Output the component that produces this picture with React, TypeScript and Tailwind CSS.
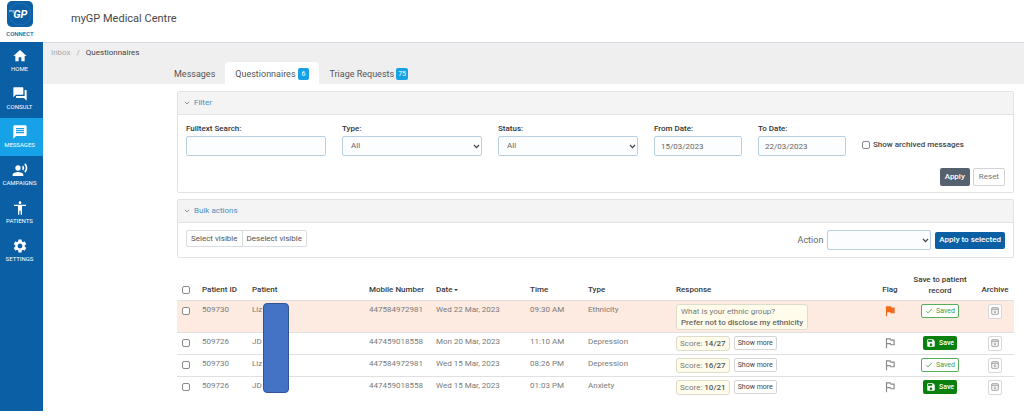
import type { ReactNode } from 'react';
import {
  MdAccessibility,
  MdCheck,
  MdFlag,
  MdForum,
  MdHome,
  MdMessage,
  MdOutlinedFlag,
  MdRecordVoiceOver,
  MdSave,
  MdSettings,
} from 'react-icons/md';
import type { IconType } from 'react-icons';

const navItems: { label: string; Icon: IconType; active?: boolean }[] = [
  { label: 'HOME', Icon: MdHome },
  { label: 'CONSULT', Icon: MdForum },
  { label: 'MESSAGES', Icon: MdMessage, active: true },
  { label: 'CAMPAIGNS', Icon: MdRecordVoiceOver },
  { label: 'PATIENTS', Icon: MdAccessibility },
  { label: 'SETTINGS', Icon: MdSettings },
];

type Row = {
  id: string;
  patient: string;
  mobile: string;
  date: string;
  time: string;
  type: string;
  score?: string;
  question?: string;
  answer?: string;
  flagged?: boolean;
  saved?: boolean;
};

const rows: Row[] = [
  {
    id: '509730',
    patient: 'Liz',
    mobile: '447584972981',
    date: 'Wed 22 Mar, 2023',
    time: '09:30 AM',
    type: 'Ethnicity',
    question: 'What is your ethnic group?',
    answer: 'Prefer not to disclose my ethnicity',
    flagged: true,
    saved: true,
  },
  { id: '509726', patient: 'JD', mobile: '447459018558', date: 'Mon 20 Mar, 2023', time: '11:10 AM', type: 'Depression', score: '14/27' },
  { id: '509730', patient: 'Liz', mobile: '447584972981', date: 'Wed 15 Mar, 2023', time: '08:26 PM', type: 'Depression', score: '16/27', saved: true },
  { id: '509726', patient: 'JD', mobile: '447459018558', date: 'Wed 15 Mar, 2023', time: '01:03 PM', type: 'Anxiety', score: '10/21' },
];

const fieldClass =
  'block h-5 w-full rounded-xs border border-[#b9d0e2] bg-[#fbfdff] text-[8px] leading-none text-[#666]';
const checkboxClass =
  'block size-2 shrink-0 appearance-none rounded-[2px] border border-[#8a8a8a] bg-white checked:bg-[#0b5fa5]';

function Chevron({ className }: { className: string }) {
  return (
    <svg viewBox="0 0 8 6" className={className} fill="none" stroke="currentColor" strokeWidth="1.5" aria-hidden="true">
      <path d="M1 1.2 4 4.4 7 1.2" />
    </svg>
  );
}

function Select({ id, options }: { id: string; options: string[] }) {
  return (
    <div className="relative w-full">
      <select id={id} className={`${fieldClass} appearance-none px-2`}>
        {options.map((option) => (
          <option key={option}>{option}</option>
        ))}
      </select>
      <Chevron className="pointer-events-none absolute top-2 right-0.5 h-[5px] w-[7px] text-[#444]" />
    </div>
  );
}

function Field({ id, label, width, children }: { id: string; label: string; width: string; children: ReactNode }) {
  return (
    <div className={width}>
      <label htmlFor={id} className="mb-px block text-[8px] leading-3 font-medium text-[#333]">
        {label}
      </label>
      {children}
    </div>
  );
}

function Panel({ title, children }: { title: string; children: ReactNode }) {
  return (
    <section className="rounded-xs border border-[#e2e2e2] bg-white">
      <h2 className="border-b border-[#e2e2e2] bg-[#f4f4f4]">
        <button type="button" className="flex h-[22px] w-full items-center gap-1 px-1.5 text-[8px] text-[#4f8fbd]">
          <Chevron className="h-1 w-[6px] text-[#888]" />
          {title}
        </button>
      </h2>
      {children}
    </section>
  );
}

function ArchiveIcon() {
  return (
    <svg viewBox="0 0 16 16" className="size-2" fill="none" stroke="currentColor" strokeWidth="1.6" aria-hidden="true">
      <rect x="1.5" y="1.5" width="13" height="13" rx="1" />
      <path d="M1.5 4.5h13M8 6.5v5M5.7 9.2 8 11.5l2.3-2.3" />
    </svg>
  );
}

function ResponseCell({ row }: { row: Row }) {
  const box = 'rounded-[3px] border border-[#dcdccb] bg-[#fffcec]';
  if (row.question) {
    return (
      <div className={`${box} inline-block px-1 py-px align-top leading-[11px]`}>
        <div>{row.question}</div>
        <div className="font-medium text-[#666]">{row.answer}</div>
      </div>
    );
  }
  return (
    <div className="flex gap-1">
      <span className={`${box} h-[15px] px-[3px] leading-[13px]`}>
        Score: <b className="font-medium text-[#555]">{row.score}</b>
      </span>
      <button type="button" className="h-[14px] rounded-xs border border-[#d4d4d4] bg-white px-[3px] text-[7px] leading-3 text-[#444]">
        Show more
      </button>
    </div>
  );
}

export default function App() {
  return (
    <div className="bg-white font-['Roboto','Liberation_Sans',sans-serif] text-[8px] leading-3 text-[#7a7a7a]">
      <header className="flex h-[42px] items-center">
        <a href="#home" className="flex w-[40px] flex-col items-center self-start pt-px text-[#0b5fa5]">
          <svg viewBox="0 0 26 26" className="size-[26px]" role="img" aria-label="myGP">
            <rect width="26" height="26" rx="5" fill="#0b5fa5" />
            <circle cx="13" cy="13" r="11" fill="none" stroke="#2f7cba" strokeWidth="0.6" />
            <text x="2" y="17" fill="#fff" fontFamily="Roboto" fontStyle="italic">
              <tspan fontSize="4" dy="-6">my</tspan>
              <tspan fontSize="11" fontWeight="700" dx="-1" dy="6">GP</tspan>
            </text>
          </svg>
          <span className="mt-0.5 text-[6px] leading-2.5 font-medium">CONNECT</span>
        </a>
        <h1 className="ml-[31px] pb-1 text-[11px] leading-4 text-[#484848]">myGP Medical Centre</h1>
      </header>

      <div className="flex">
        <nav className="w-[43px] shrink-0 bg-[#0b5fa5] pb-[141px]" aria-label="Main">
          {navItems.map(({ label, Icon, active }) => (
            <a
              key={label}
              href={`#${label.toLowerCase()}`}
              className={`flex h-[38px] flex-col items-center justify-center pr-1 text-white ${active ? 'bg-[#17a2e8]' : ''}`}
            >
              <Icon className="size-4" />
              <span className="text-[6px] leading-2.5">{label}</span>
            </a>
          ))}
        </nav>

        <main className="min-w-0 flex-1">
          <div className="flex h-[42px] flex-col justify-between border-t border-[#d8dce2] bg-[#efefef]">
            <nav aria-label="Breadcrumb" className="flex gap-1.5 pt-1 pl-2 text-[#aaa]">
              <a href="#inbox">Inbox</a>
              <span>/</span>
              <span className="text-[#444]">Questionnaires</span>
            </nav>
            <div role="tablist" className="flex h-[22px] pl-[121px] text-[9px] text-[#555] *:pt-0.5">
              <button type="button" role="tab" className="px-2.5">Messages</button>
              <button type="button" role="tab" aria-selected="true" className="flex items-center gap-0.5 rounded-t bg-white px-2.5">
                Questionnaires
                <span className="rounded-xs bg-[#17a2e8] px-1 text-[7px] leading-3 text-white">6</span>
              </button>
              <button type="button" role="tab" className="flex items-center gap-0.5 px-2.5">
                Triage Requests
                <span className="rounded-xs bg-[#17a2e8] px-0.5 text-[7px] leading-3 text-white">75</span>
              </button>
            </div>
          </div>

          <div className="flex flex-col gap-1.5 pt-[7px] pr-2.5 pl-[134px]">
            <Panel title="Filter">
              <form className="px-2 pt-2 pb-1.5">
                <div className="flex gap-4">
                  <Field id="search" label="Fulltext Search:" width="w-[140px]">
                    <input id="search" type="text" className={`${fieldClass} px-1.5`} />
                  </Field>
                  <Field id="type" label="Type:" width="w-[140px]">
                    <Select id="type" options={['All']} />
                  </Field>
                  <Field id="status" label="Status:" width="w-[140px]">
                    <Select id="status" options={['All']} />
                  </Field>
                  <Field id="from" label="From Date:" width="w-[88px]">
                    <input id="from" type="text" defaultValue="15/03/2023" className={`${fieldClass} px-1.5`} />
                  </Field>
                  <Field id="to" label="To Date:" width="w-[88px]">
                    <input id="to" type="text" defaultValue="22/03/2023" className={`${fieldClass} px-1.5`} />
                  </Field>
                  <label className="mt-4 flex items-center gap-[3px] self-start font-medium text-[#444]">
                    <input type="checkbox" className={checkboxClass} />
                    Show archived messages
                  </label>
                </div>
                <div className="mt-3 flex justify-end gap-[3px]">
                  <button type="button" className="h-[18px] rounded-xs bg-[#55616e] px-[5px] font-medium text-white">Apply</button>
                  <button type="reset" className="h-[18px] rounded-xs border border-[#d4d4d4] bg-white px-[5px] text-[#777]">Reset</button>
                </div>
              </form>
            </Panel>

            <Panel title="Bulk actions">
              <div className="flex items-start justify-between px-2 py-[7px]">
                <div className="flex h-[17px] rounded-xs border border-[#d8dde2] text-[#555]">
                  <button type="button" className="border-r border-[#d8dde2] px-1">Select visible</button>
                  <button type="button" className="px-1">Deselect visible</button>
                </div>
                <div className="flex items-center gap-1">
                  <label htmlFor="action" className="text-[9px] text-[#666]">Action</label>
                  <div className="w-[104px]">
                    <Select id="action" options={['']} />
                  </div>
                  <button type="button" className="h-[17px] rounded-xs bg-[#0b5fa5] px-1 font-medium text-white">Apply to selected</button>
                </div>
              </div>
            </Panel>

            <div className="relative mt-[5px]">
              <table className="w-full table-fixed text-left">
                <colgroup>
                  <col className="w-[25px]" />
                  <col className="w-[50px]" />
                  <col className="w-[117px]" />
                  <col className="w-[67px]" />
                  <col className="w-[94px]" />
                  <col className="w-[58px]" />
                  <col className="w-[88px]" />
                  <col />
                  <col className="w-[28px]" />
                  <col className="w-[72px]" />
                  <col className="w-[38px]" />
                </colgroup>
                <thead>
                  <tr className="h-[31px] align-bottom text-[#383838] *:pb-1 *:font-medium">
                    <th className="pl-[5px]">
                      <input type="checkbox" aria-label="Select all" className={`${checkboxClass} mb-0.5`} />
                    </th>
                    <th>Patient ID</th>
                    <th>Patient</th>
                    <th>Mobile Number</th>
                    <th aria-sort="descending">
                      <span className="flex items-center gap-0.5">
                        Date
                        <svg viewBox="0 0 6 3" className="h-0.5 w-1" fill="currentColor" aria-hidden="true">
                          <path d="M0 0h6L3 3z" />
                        </svg>
                      </span>
                    </th>
                    <th>Time</th>
                    <th>Type</th>
                    <th>Response</th>
                    <th className="text-center">Flag</th>
                    <th className="px-1 text-center leading-[11px]">Save to patient record</th>
                    <th className="text-center">Archive</th>
                  </tr>
                </thead>
                <tbody>
                  {rows.map((row, index) => (
                    <tr
                      key={index}
                      className={`border-t border-[#e0e0e0] align-top *:pt-[3px] ${row.flagged ? 'h-8 bg-[#fdebe1]' : 'h-[22px]'}`}
                    >
                      <td className="pl-[5px]">
                        <input type="checkbox" aria-label={`Select ${row.id}`} className={`${checkboxClass} mt-[3px]`} />
                      </td>
                      <td>{row.id}</td>
                      <td>{row.patient}</td>
                      <td>{row.mobile}</td>
                      <td>{row.date}</td>
                      <td>{row.time}</td>
                      <td>{row.type}</td>
                      <td>
                        <ResponseCell row={row} />
                      </td>
                      <td>
                        <button type="button" aria-label="Flag" className="mx-auto block">
                          {row.flagged ? (
                            <MdFlag className="size-[14px] text-[#f26a1b]" />
                          ) : (
                            <MdOutlinedFlag className="size-[14px] text-[#888]" />
                          )}
                        </button>
                      </td>
                      <td>
                        {row.saved ? (
                          <button type="button" className="mx-auto flex h-[14px] w-[38px] items-center justify-center gap-[3px] rounded-xs border border-[#58ad5b] bg-white text-[7px] text-[#3f9c43]">
                            <MdCheck className="size-2" />
                            Saved
                          </button>
                        ) : (
                          <button type="button" className="mx-auto flex h-[14px] w-[34px] items-center justify-center gap-[3px] rounded-xs bg-[#0a800e] text-[7px] font-medium text-white">
                            <MdSave className="size-2.5" />
                            Save
                          </button>
                        )}
                      </td>
                      <td>
                        <button type="button" aria-label="Archive" className="mx-auto flex h-[15px] w-[14px] items-center justify-center rounded-xs border border-[#d8d8d8] bg-white text-[#888]">
                          <ArchiveIcon />
                        </button>
                      </td>
                    </tr>
                  ))}
                </tbody>
              </table>
              <div className="absolute top-[34px] left-[86px] h-[90px] w-[26px] rounded border border-[#2f5597] bg-[#4472c4]" />
            </div>
          </div>
        </main>
      </div>
    </div>
  );
}
